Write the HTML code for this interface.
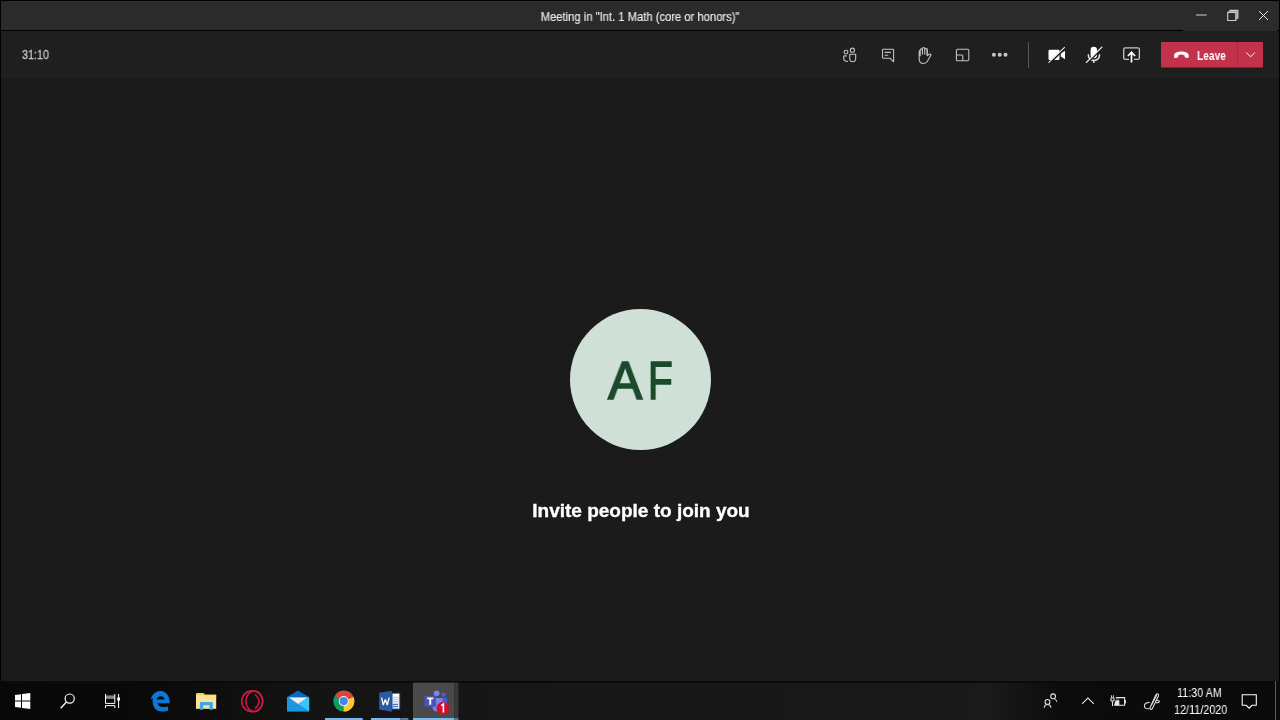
<!DOCTYPE html>
<html><head><meta charset="utf-8">
<style>
*{margin:0;padding:0;box-sizing:border-box}
html,body{width:1280px;height:720px;overflow:hidden;background:#000;font-family:"Liberation Sans",sans-serif}
.a{position:absolute;white-space:nowrap}
.t{will-change:transform}
#title{left:1px;top:1px;width:1278px;height:29px;background:#2c2b2b}
#tline{left:1183px;top:30px;width:94px;height:1px;background:#2c2b2b}
#toolbar{left:1px;top:31px;width:1278px;height:47px;background:#201f1f}
#main{left:1px;top:78px;width:1278px;height:603px;background:#1c1b1b}
#tbline{left:0;top:681px;width:1280px;height:2px;background:#0a0a0a}
#taskbar{left:0;top:683px;width:1280px;height:37px;background:linear-gradient(to right,#080808 0px,#090909 140px,#141414 320px,#171717 560px,#181818 800px,#1a1a1a 990px,#0b0b0b 1065px,#0a0a0a 1280px)}
.ttl{left:0;width:1280px;top:10px;text-align:center;color:#ececec;-webkit-text-stroke:0.15px #ececec;font-size:12px;line-height:14px;transform:scaleX(0.935);transform-origin:641px 0}
.timer{left:22px;top:48px;color:#c8c6c4;font-size:13px;-webkit-text-stroke:0.3px #c8c6c4;line-height:14px;transform:scaleX(0.83);transform-origin:0 0}
#avatar{left:570px;top:309px;width:141px;height:141px;border-radius:50%;background:#cfe0d7}
.afa,.aff{top:350.5px;color:#1b4a2c;font-size:54.5px;line-height:60px;-webkit-text-stroke:1.7px #1b4a2c;transform-origin:0 0}
.afa{left:607.5px;transform:scaleX(0.94)}
.aff{left:647.5px;transform:scaleX(0.74)}
.inv{left:0.5px;width:1280px;top:499.5px;text-align:center;color:#fff;font-size:19px;font-weight:bold;line-height:22px;-webkit-text-stroke:0.35px #fff}
.lv{left:1197.4px;top:48.6px;color:#fff;font-size:12px;font-weight:bold;line-height:14px;transform:scaleX(0.85);transform-origin:0 0}
.tm{left:1177px;top:686px;color:#fff;font-size:12px;line-height:14px;transform:scaleX(0.9);transform-origin:0 0}
.dt{left:1174px;top:703px;color:#fff;font-size:12px;line-height:14px;transform:scaleX(0.9);transform-origin:0 0}
svg#ic{position:absolute;left:0;top:0;width:1280px;height:720px}
</style></head><body>
<div class="a" id="title"></div>
<div class="a" id="tline"></div>
<div class="a" id="toolbar"></div>
<div class="a" id="main"></div>
<div class="a" id="tbline"></div>
<div class="a" id="taskbar"></div>
<div class="a" id="avatar"></div>
<svg id="ic" viewBox="0 0 1280 720">
<!-- window controls -->
<g stroke="#e6e6e6" stroke-width="1" fill="none">
<path d="M1196,15 H1206.6" stroke="#cfcfcf"/>
<path d="M1259,11 L1268,20 M1268,11 L1259,20"/>
</g>
<path fill="#9a9a9a" d="M1227.6,12.4 L1229.6,10.2 H1238 V18.6 L1235.8,20.6 V12.4 Z"/>
<path fill="none" stroke="#cccccc" stroke-width="1.1" d="M1227.7,12.4 H1235.8 V20.5 H1227.7 Z M1229.6,10.4 H1237.9 V18.6"/>
<!-- toolbar icons -->
<g stroke="#c4c2c0" stroke-width="1.1" fill="none" stroke-linejoin="round" stroke-linecap="round">
<circle cx="846" cy="52.1" r="1.9"/>
<circle cx="852.4" cy="50.2" r="2.1"/>
<path d="M846.3,55.9 H844.6 Q843.7,55.9 843.7,56.8 V58.3 Q843.7,61.5 847.6,61.5"/>
<path d="M849.7,54.3 H855.7 V58.6 Q855.7,61.7 852.7,61.7 Q849.7,61.7 849.7,58.6 Z"/>
<path d="M883.3,49.3 H892.8 Q893.6,49.3 893.6,50.1 V61.8 L890.2,58.3 H883.3 Q882.5,58.3 882.5,57.5 V50.1 Q882.5,49.3 883.3,49.3 Z"/>
<path d="M885,52.4 H890.4 M885,55.2 H887.8"/>
<g transform="translate(0,0.7)"><path d="M920.2,55 V49.3 Q920.2,48.2 921.3,48.2 Q922.4,48.2 922.4,49.3 V47.8 Q922.4,46.8 923.6,46.8 Q924.8,46.8 924.8,47.8 V48.6 Q924.8,47.6 926,47.6 Q927.2,47.6 927.2,48.8 V55 L929.2,53.6 Q930.6,52.8 931,54.2 L927.4,60.6 Q926.2,62.8 923.6,62.8 Q919.2,62.8 919.2,58.2 V50.6 Q919.2,49.8 920.2,49.8"/>
<path d="M922.4,49.3 V53.6 M924.8,48.6 V53.4 M927.2,48.8 V53.6"/></g>
<path d="M963,60.8 H967.6 Q968.8,60.8 968.8,59.6 V50.4 Q968.8,49.2 967.6,49.2 H957.6 Q956.4,49.2 956.4,50.4 V55"/>
<rect x="956.4" y="55" width="6.4" height="5.8" rx="1"/>
</g>
<g fill="#c8c6c4">
<circle cx="993.9" cy="54.8" r="2"/><circle cx="999.7" cy="54.8" r="2"/><circle cx="1005.5" cy="54.8" r="2"/>
</g>
<rect x="1028" y="42" width="1" height="26" fill="#5a5959"/>
<!-- camera off -->
<rect x="1048.5" y="49.8" width="11" height="10.2" rx="1.3" fill="#fff"/>
<polygon points="1060.8,53.6 1065,50.8 1065,59.2 1060.8,56.4" fill="#fff"/>
<path d="M1049.7,63.1 L1065.4,48.1" stroke="#201f1f" stroke-width="1.6"/>
<path d="M1048.8,62.3 L1064.5,47.3" stroke="#e8e8e8" stroke-width="1.1" stroke-linecap="round"/>
<!-- mic off -->
<rect x="1090.6" y="46.8" width="6.4" height="11.4" rx="3.2" fill="#fff"/>
<path d="M1088.3,54.2 Q1088.3,60.4 1093.8,60.4 Q1099.6,60.4 1099.6,54.2 M1093.8,60.4 V63" stroke="#e8e8e8" stroke-width="1.5" fill="none"/>
<path d="M1087.2,63.3 L1102.9,47.8" stroke="#201f1f" stroke-width="1.6"/>
<path d="M1086.3,62.5 L1102,47" stroke="#e8e8e8" stroke-width="1.1" stroke-linecap="round"/>
<!-- share -->
<path d="M1129,59.4 H1125.3 Q1123.7,59.4 1123.7,57.8 V49.5 Q1123.7,47.9 1125.3,47.9 H1137.8 Q1139.4,47.9 1139.4,49.5 V57.8 Q1139.4,59.4 1137.8,59.4 H1134" stroke="#c8c6c4" stroke-width="1.3" fill="none"/>
<path d="M1131.5,62.5 V52.6 M1127.9,56 L1131.5,52.3 L1135.1,56" stroke="#fff" stroke-width="1.7" fill="none"/>
<!-- leave -->
<rect x="1161" y="42" width="102" height="25.5" rx="0.5" fill="#c4314b"/>
<rect x="1236.8" y="42" width="1.3" height="25.5" fill="#a92a41"/>
<path fill="#fff" d="M1174,56 C1174,52.6 1178,51.5 1181.4,51.5 C1184.8,51.5 1188.8,52.6 1188.8,56 L1188.7,57.2 Q1188.5,58 1187.6,57.9 L1185.3,57.4 Q1184.6,57.2 1184.6,56.5 V55.5 Q1183,54.5 1181.4,54.5 Q1179.8,54.5 1178.2,55.5 V56.5 Q1178.2,57.2 1177.5,57.4 L1175.2,57.9 Q1174.3,58 1174.1,57.2 Z"/>
<path d="M1246.3,52.5 L1250.6,56.8 L1254.9,52.5" stroke="#fff" stroke-width="1" fill="none"/>
<!-- taskbar: running indicators -->
<rect x="413" y="682.6" width="41.4" height="35.4" fill="#4a4a4a"/>
<rect x="454.4" y="682.6" width="4" height="35.4" fill="#393939"/>
<rect x="325" y="718" width="37.7" height="2" fill="#76b9ed"/>
<rect x="371" y="718" width="29.4" height="2" fill="#76b9ed"/>
<rect x="400.4" y="718" width="8" height="2" fill="#4f7ea3"/>
<rect x="413" y="718" width="41.4" height="2" fill="#76b9ed"/>
<rect x="454.4" y="718" width="4" height="2" fill="#4f7ea3"/>
<!-- windows logo -->
<g fill="#fff">
<polygon points="15,695 21,694.2 21,700.4 15,700.4"/>
<polygon points="22,694 30.3,692.9 30.3,700.4 22,700.4"/>
<polygon points="15,701.4 21,701.4 21,707.8 15,707.1"/>
<polygon points="22,701.4 30.3,701.4 30.3,709 22,708"/>
</g>
<!-- search -->
<circle cx="69.7" cy="698.6" r="4.6" stroke="#fff" stroke-width="1.2" fill="none"/>
<path d="M66.4,702 L60.7,708.3" stroke="#fff" stroke-width="1.3"/>
<!-- task view -->
<rect x="105.5" y="695.4" width="9.3" height="3.5" fill="#8a8a8a"/>
<g stroke="#fff" stroke-width="1" fill="none">
<path d="M105.5,694 V703.4 H114.8 V694"/>
<path d="M105.5,708 V705.6 H114.8 V708"/>
<path d="M118.6,694 V708"/>
</g>
<rect x="117.2" y="697.5" width="2.8" height="3" fill="#fff"/>
<!-- edge -->
<path fill-rule="evenodd" fill="#0a78d8" d="M169.8,703.2 C169.8,696 166,691 160.8,691 C155.6,691 152.6,695.6 152.6,701.3 C152.6,707.4 156.4,711.6 161.8,711.6 C164.2,711.6 166.4,711.2 168,710.4 V706.4 C166.6,706.9 164.6,707 162.6,707 C159.6,707 157.8,705.4 157.6,703.2 Z M156.4,699.6 C157.1,697.4 158.6,696.2 160.7,696.2 C162.8,696.2 164.4,697.4 164.6,699.6 Z"/>
<path fill="#0a78d8" d="M150.9,699.8 C151.6,694.6 155.6,691 160.8,691 C157.4,692 155,694.2 154,697.2 Z"/>
<!-- explorer -->
<path d="M196,694.2 Q196,693 197.2,693 H203.6 L205.2,694.6 H216.2 V697 H196 Z" fill="#f0c03c"/>
<rect x="196" y="695.2" width="20.2" height="13.6" fill="#fde398"/>
<rect x="196.3" y="693.4" width="7" height="1.6" rx="0.8" fill="#f7d56a"/>
<path d="M199.8,709.7 V702.9 Q199.8,701.9 200.8,701.9 H211.8 Q212.8,701.9 212.8,702.9 V709.7 H209.4 V705.3 H203.2 V709.7 Z" fill="#3aa9e8"/>
<!-- opera -->
<g fill="none" stroke="#cc1a44" stroke-width="1.6">
<circle cx="252.2" cy="701.3" r="10.5"/>
<ellipse cx="254.3" cy="701.3" rx="8.4" ry="10.3"/>
<path d="M255,694.5 Q259,698 259,701.5 Q259,705 255,708.5"/>
</g>
<!-- mail -->
<rect x="287" y="697" width="22.1" height="14.6" fill="#1c96e3"/>
<polygon points="298,704 309.1,697 309.1,711" fill="#3ec3f2"/>
<polygon points="287,697 298,690.4 309.1,697" fill="#0a68c4"/>
<polygon points="289,697.5 307.5,697.5 298,704" fill="#f0f0f0"/>
<!-- chrome -->
<circle cx="343.7" cy="701.1" r="10.5" fill="#0f9d58"/>
<path d="M343.7,701.1 L335.1,695.5 A10.5,10.5 0 0 1 353.6,697 Z" fill="#db4437"/>
<path d="M343.7,701.1 L353.6,697 A10.5,10.5 0 0 1 343.7,711.6 Z" fill="#fcc934"/>
<path d="M338.5,698.5 L334.8,695.4 L343.7,701.1 Z" fill="#db4437"/>
<circle cx="343.7" cy="701.1" r="5" fill="#f1f1f1"/>
<circle cx="343.7" cy="701.1" r="4.1" fill="#4285f4"/>
<!-- word -->
<polygon points="379.1,692.8 391.8,690.7 391.8,711.8 379.1,709.5" fill="#2b5aa5"/>
<rect x="391.6" y="692.8" width="8.6" height="16.7" fill="#2b5aa5"/>
<rect x="392.6" y="693.8" width="6.6" height="14.7" fill="#fff"/>
<g fill="#a8bde2"><rect x="392.6" y="696.8" width="6" height="1"/><rect x="392.6" y="698.8" width="6" height="1"/><rect x="392.6" y="700.8" width="6" height="1"/><rect x="392.6" y="702.6" width="6" height="1"/></g>
<g fill="#2b5aa5"><rect x="392.6" y="704.2" width="5.6" height="1"/><rect x="392.6" y="706.2" width="5.6" height="1"/></g>
<path d="M381.6,697.6 L383.3,705 L385.3,699.4 L387.3,705 L389.1,697.6" stroke="#fff" stroke-width="1.3" fill="none" stroke-linejoin="bevel"/>
<!-- teams -->
<circle cx="436.6" cy="693.3" r="2.9" fill="#7b83eb"/>
<circle cx="443.6" cy="694.8" r="2.2" fill="#5059c9"/>
<path d="M440.5,698 H447 V705 Q447,708.5 443.5,708.5 Q440.5,708.5 440.5,705 Z" fill="#5059c9"/>
<path d="M432.5,698 H442.5 V707 Q442.5,711.5 437.5,711.5 Q432.5,711.5 432.5,707 Z" fill="#7b83eb"/>
<rect x="424.5" y="695.8" width="11.5" height="11" rx="0.8" fill="#4b53bc"/>
<path d="M427.2,698.4 H433.3 M430.25,698.4 V704.8" stroke="#fff" stroke-width="1.9" fill="none"/>
<circle cx="442.8" cy="708.2" r="6.3" fill="#d3102c"/>
<path d="M441.2,705.6 L443.4,704 V712.4" stroke="#fff" stroke-width="1.6" fill="none"/>
<!-- tray -->
<g stroke="#e4e4e4" stroke-width="1.05" fill="none" stroke-linecap="round">
<circle cx="1053.1" cy="696.3" r="2.4"/>
<path d="M1054.7,698.9 Q1056.2,699.7 1056.7,701.3"/>
<circle cx="1047.5" cy="701.9" r="2.4"/>
<path d="M1044.2,707.3 Q1044.8,704.5 1047.5,704.5 Q1050.2,704.5 1050.9,707.3"/>
<path d="M1082.3,703.7 L1087.9,698.1 L1093.6,703.7"/>
</g>
<g fill="#e6e6e6">
<rect x="1111" y="695.3" width="0.9" height="2.4"/><rect x="1113.1" y="695.3" width="0.9" height="2.4"/>
<rect x="1125" y="700" width="0.9" height="3.5"/>
<polygon points="1114.3,705.2 1114.3,704 1115.7,700.2 1119.3,700.2 1119.3,705.2"/>
</g>
<g stroke="#e6e6e6" stroke-width="1.1" fill="none">
<circle cx="1112.5" cy="699.5" r="1.7"/>
<path d="M1112.5,701.2 V706"/>
<path d="M1115.8,697.6 H1124.6 V705.3 H1114.3"/>
</g>
<path d="M1116.3,698.4 H1119.3 V699.6 H1115.9 Z" fill="#777"/>
<g stroke="#dcdcdc" stroke-width="1.1" fill="none" stroke-linecap="round" stroke-linejoin="round">
<path d="M1149.8,708.3 L1155.9,694.8 Q1156.8,693.4 1157.9,694 Q1158.9,694.7 1158.4,696 L1152.1,708.9 Q1151.4,709.6 1150.6,709.3 Z"/>
<path d="M1151.6,704.8 L1156.6,695.6"/>
<path d="M1149.2,702.4 Q1144.4,702.8 1144.4,706 Q1144.6,709 1148.6,708.8"/>
<path d="M1156.2,700.3 Q1159.3,700.3 1159.3,701.6 Q1159.2,702.8 1156,702.8"/>
</g>
<path d="M1242.2,694.7 H1256.3 V705.3 H1252 L1249.1,708.2 L1246.2,705.3 H1242.2 Z" stroke="#fff" stroke-width="1.05" fill="none"/>
<rect x="1275" y="681" width="1" height="39" fill="#5c5c5c"/>
</svg>
<div class="a t ttl">Meeting in "Int. 1 Math (core or honors)"</div>
<div class="a t timer">31:10</div>
<div class="a t afa">A</div><div class="a t aff">F</div>
<div class="a t inv">Invite people to join you</div>
<div class="a t lv">Leave</div>
<div class="a t tm">11:30 AM</div>
<div class="a t dt">12/11/2020</div>
</body></html>
